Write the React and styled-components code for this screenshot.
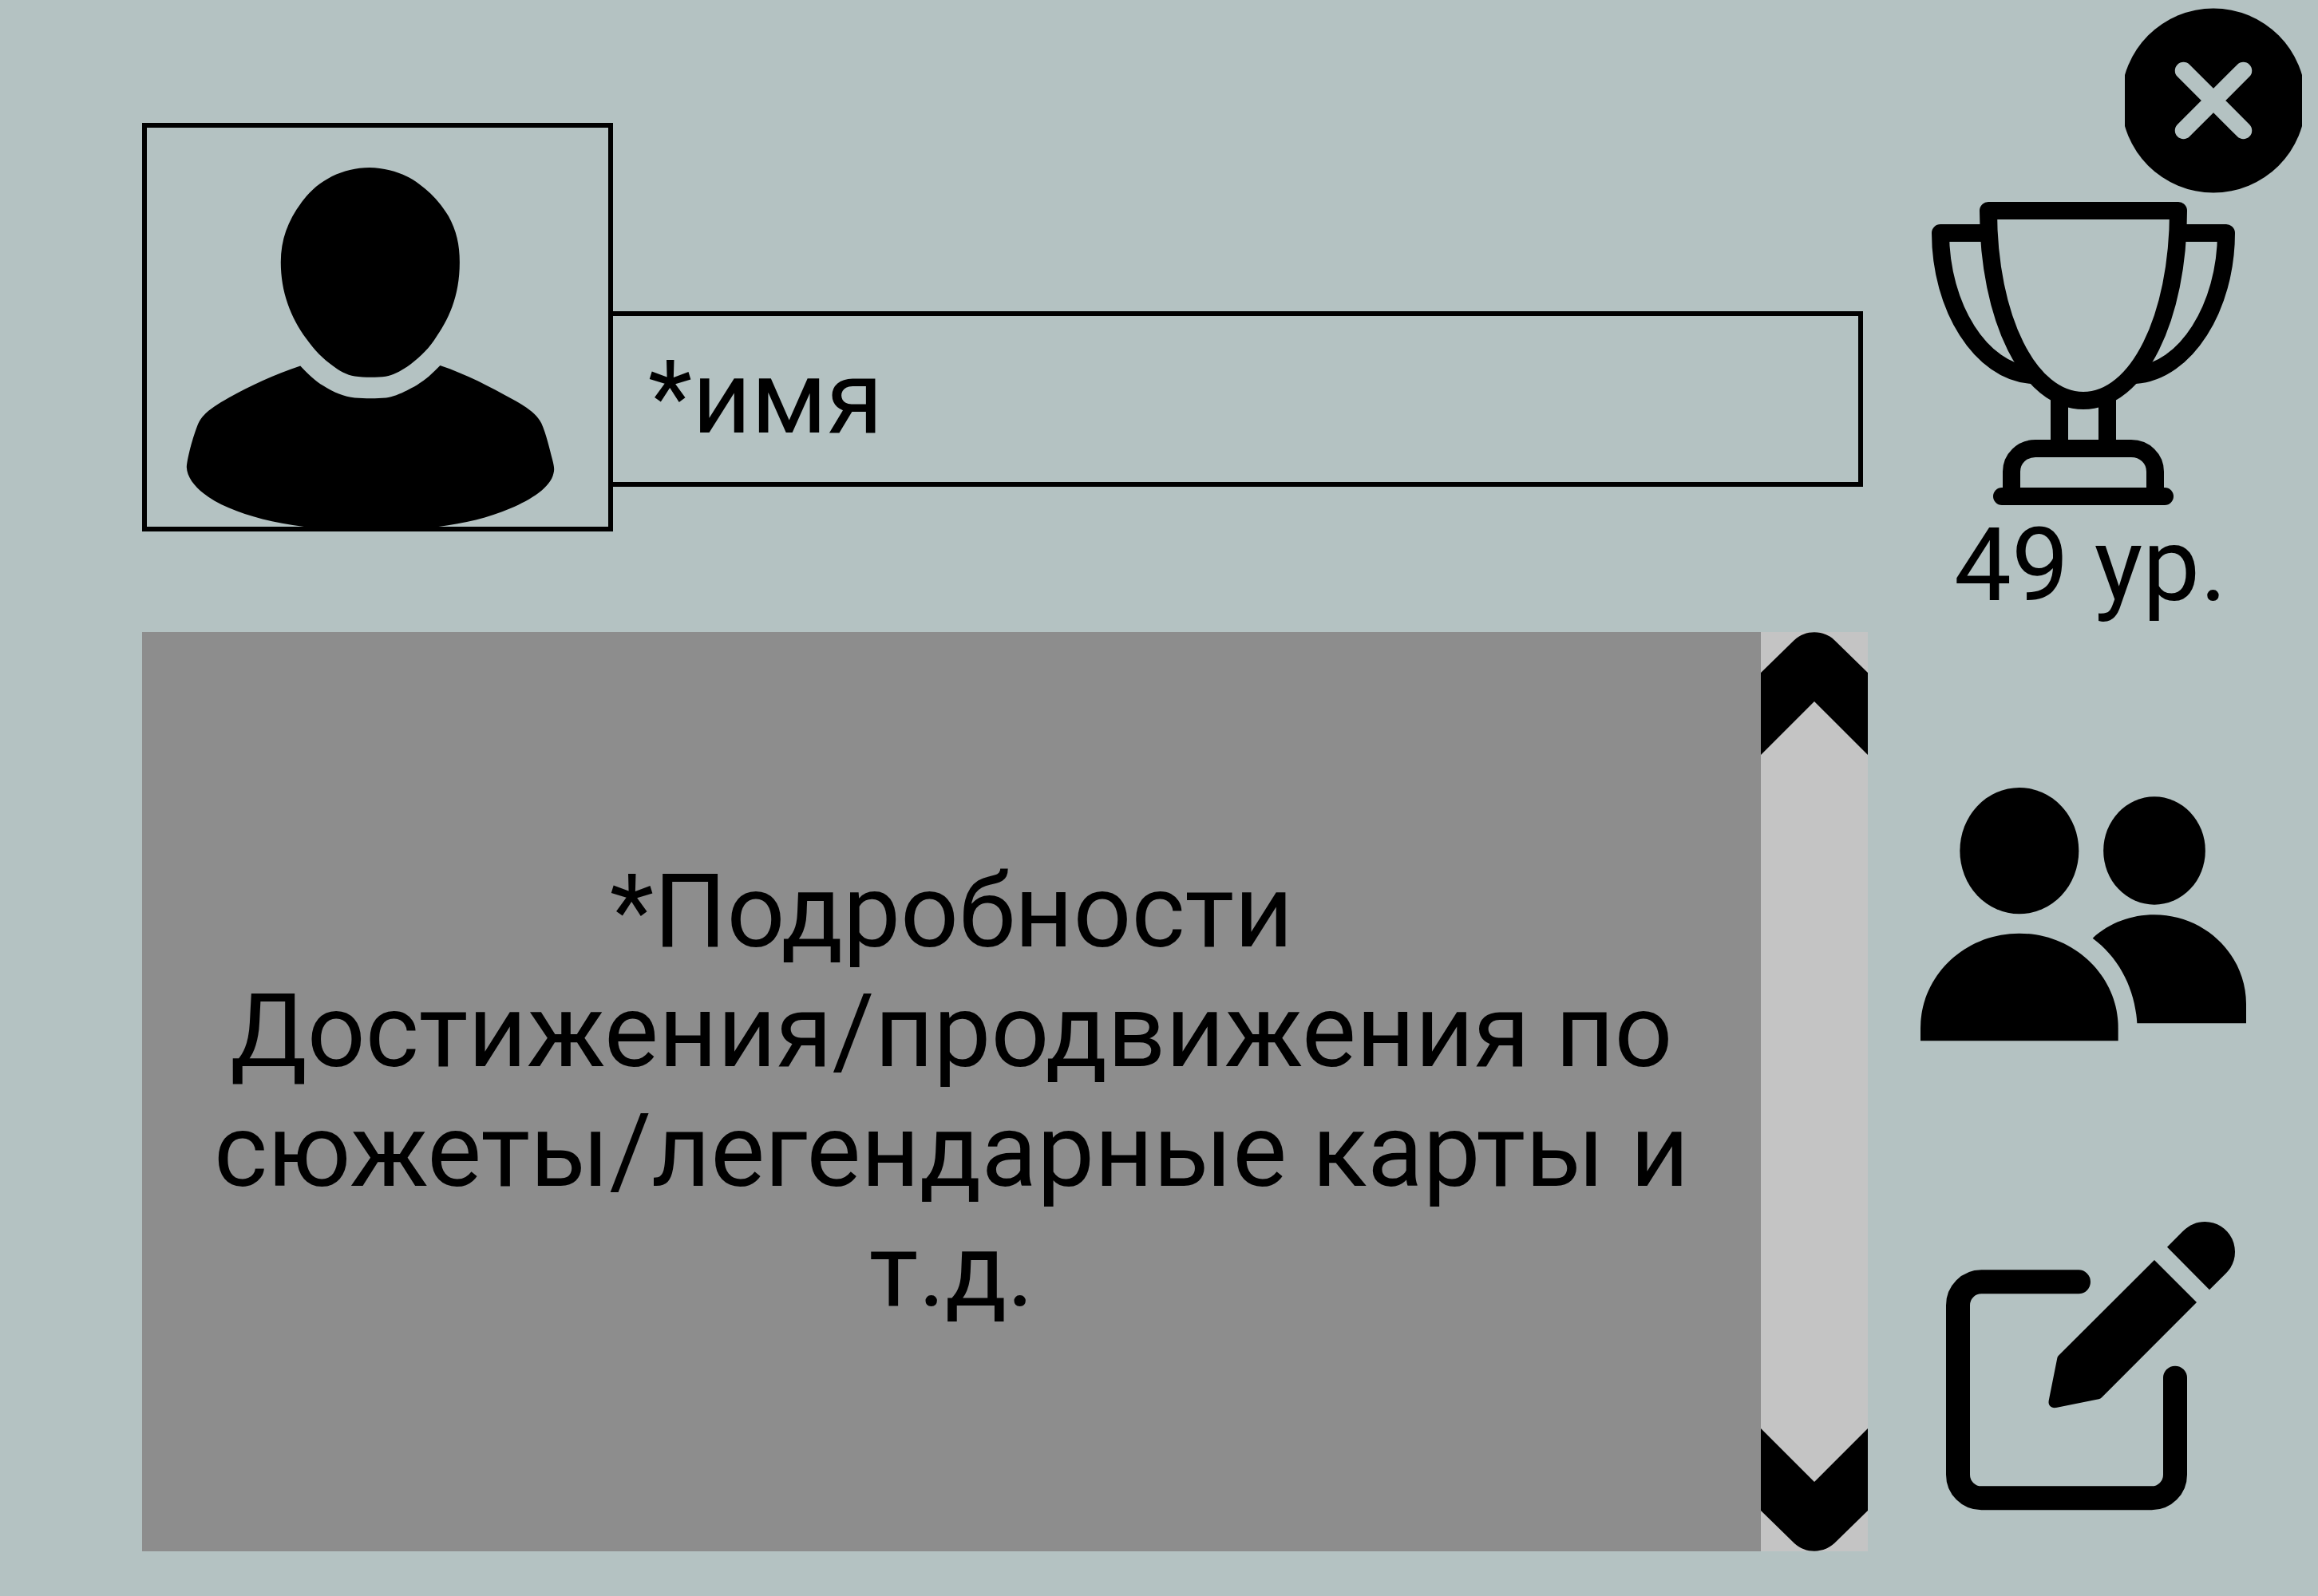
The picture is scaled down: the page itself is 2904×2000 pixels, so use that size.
import React from "react";
import styled, { createGlobalStyle } from "styled-components";

const colors = {
  page: "#b4c2c2",
  panel: "#8d8d8d",
  track: "#c4c4c4",
  ink: "#000000",
};

const GlobalStyle = createGlobalStyle`
  *, *::before, *::after { box-sizing: border-box; }
  body {
    margin: 0;
    background: ${colors.page};
    color: ${colors.ink};
    font-family: Roboto, "Noto Sans", sans-serif;
    font-size: 128px;
    line-height: 150px;
  }
`;

const Page = styled.div`
  display: grid;
  grid-template-columns: minmax(0, 1fr) 564px;
  min-height: 100vh;
`;

const Main = styled.main`
  display: flex;
  flex-direction: column;
  gap: 126px;
  padding: 154px 0 56px 178px;
`;

const ProfileHeader = styled.header`
  display: flex;
  align-items: flex-end;
  padding-right: 6px;
`;

const Avatar = styled.figure`
  flex: none;
  width: 590px;
  height: 512px;
  margin: 0;
  border: 6px solid ${colors.ink};
`;

const NameField = styled.label`
  flex: 1;
  display: flex;
  min-width: 0;
  margin: 0 0 56px -6px;
  border: 6px solid ${colors.ink};
`;

const NameInput = styled.input`
  flex: 1;
  width: 100%;
  min-width: 0;
  height: 208px;
  padding: 0 44px 4px;
  border: 0;
  background: transparent;
  color: inherit;
  font: inherit;
`;

const DetailsPanel = styled.section`
  flex: 1;
  display: flex;
  background: ${colors.panel};
`;

const DetailsText = styled.p`
  flex: 1;
  align-self: center;
  margin: 0;
  padding-bottom: 2px;
  text-align: center;
`;

const ScrollTrack = styled.div`
  flex: none;
  display: flex;
  flex-direction: column;
  justify-content: space-between;
  width: 134px;
  background: ${colors.track};
`;

const IconButton = styled.button`
  display: block;
  padding: 0;
  border: 0;
  background: none;
  color: inherit;
  cursor: pointer;
`;

const Icon = styled.svg`
  display: block;
  width: ${({ $width }) => $width};
  height: ${({ $height }) => $height};
  transform: ${({ $flipped }) => ($flipped ? "scaleY(-1)" : "none")};
`;

const Sidebar = styled.aside`
  display: flex;
  flex-direction: column;
`;

const TopBar = styled.div`
  display: flex;
  justify-content: flex-end;
  padding: 10px 20px 11px;
`;

const Actions = styled.nav`
  display: flex;
  flex-direction: column;
  align-items: center;
  gap: 204px;
  padding-right: 24px;
`;

const Level = styled.div`
  display: flex;
  flex-direction: column;
  align-items: center;
`;

const LevelText = styled.span`
  padding-left: 18px;
`;

const FriendsButton = styled(IconButton)`
  padding-bottom: 22px;
`;

const PersonIcon = () => (
  <Icon $width="100%" $height="100%" viewBox="59 58 1416 1451" preserveAspectRatio="none" aria-hidden="true">
    <path d="M742 203C803 204 856 228 895 263C932 295 960 332 985 380C1009 432 1019 482 1019 548C1019 672 985 758 940 832C918 870 888 902 858 927C835 945 815 958 792 963C765 967 723 967 697 962C672 957 650 942 630 924C600 900 572 865 548 825C500 748 470 655 470 548C470 460 494 390 540 320C585 250 660 203 742 203Z" />
    <path d="M530 924C555 956 578 981 600 996C632 1020 665 1037 697 1040C728 1043 765 1043 793 1040C822 1036 860 1013 888 994C915 974 934 954 959 923C1040 955 1115 1002 1180 1045C1225 1074 1255 1098 1270 1133C1284 1170 1295 1225 1303 1262C1308 1285 1311 1300 1307 1315C1298 1365 1240 1410 1175 1442C1105 1478 1030 1497 948 1510H548C450 1496 375 1473 310 1440C240 1405 183 1350 181 1292C184 1250 205 1165 217 1133C230 1098 265 1070 310 1040C375 997 450 955 530 924Z" />
  </Icon>
);

const ChevronIcon = ({ flipped }) => (
  <Icon $width="134px" $height="154px" $flipped={flipped} viewBox="0 0 134 154" aria-hidden="true">
    <path d="M0 51L42 10C56 -3 78 -3 92 10L134 51V154L67 87L0 154Z" />
  </Icon>
);

const CloseIcon = () => (
  <Icon $width="222px" $height="232px" viewBox="0 0 222 232" aria-hidden="true">
    <circle cx="111" cy="116" r="115.5" />
    <path d="M73.5 78.5L148.5 153.5M148.5 78.5L73.5 153.5" stroke={colors.page} strokeWidth="21.5" strokeLinecap="round" />
  </Icon>
);

const TrophyIcon = () => (
  <Icon $width="380px" $height="380px" viewBox="0 0 380 380" fill="none" stroke="currentColor" strokeWidth="22" strokeLinecap="round" strokeLinejoin="round" aria-hidden="true">
    <path d="M71 11H309C309 146 258 249 190 249S71 146 71 11Z" />
    <path d="M71 39H11C11 132 62 213 125 217" strokeLinecap="butt" />
    <path d="M309 39H369C369 132 318 213 255 217" strokeLinecap="butt" />
    <path d="M160 240V309M220 240V309" strokeLinecap="butt" />
    <path d="M100 369V338C100 322 113 309 130 309H250C267 309 280 322 280 338V369" />
    <path d="M88 369H292" />
  </Icon>
);

const FriendsIcon = () => (
  <Icon $width="408px" $height="318px" viewBox="78 82 1224 954" aria-hidden="true">
    <ellipse cx="449.5" cy="319.5" rx="223.5" ry="237.5" />
    <ellipse cx="957" cy="319" rx="191.5" ry="203" />
    <path d="M78 1034V985C78 789 244 630 449 630S821 789 821 985V1034Z" />
    <path d="M725 648C789 590 870 560 957 560C1148 560 1302 712 1302 895V968H892C885 840 825 722 725 648Z" />
  </Icon>
);

const EditIcon = () => (
  <Icon $width="380px" $height="362px" viewBox="60 92 1140 1086" aria-hidden="true">
    <path d="M612 318H247A88 88 0 0 0 159 406V1043A88 88 0 0 0 247 1131H887A88 88 0 0 0 975 1043V679" fill="none" stroke="currentColor" strokeWidth="90" strokeLinecap="round" />
    <path d="M897 236L1056 395L699 753Q695 758 688 759L528 791C510 794 497 783 500 765L532 604Q533 599 536 596Z" />
    <path d="M945 187L1003 129C1030 103 1056 92 1087 92C1150 92 1200 143 1200 205C1200 235 1190 262 1165 287L1104 348Z" />
  </Icon>
);

export default function App() {
  return (
    <>
      <GlobalStyle />
      <Page>
        <Main>
          <ProfileHeader>
            <Avatar>
              <PersonIcon />
            </Avatar>
            <NameField>
              <NameInput type="text" aria-label="имя" defaultValue="*имя" />
            </NameField>
          </ProfileHeader>
          <DetailsPanel>
            <DetailsText>
              *Подробности
              <br />
              Достижения/продвижения по сюжеты/легендарные карты и т.д.
            </DetailsText>
            <ScrollTrack>
              <IconButton type="button">
                <ChevronIcon />
              </IconButton>
              <IconButton type="button">
                <ChevronIcon flipped />
              </IconButton>
            </ScrollTrack>
          </DetailsPanel>
        </Main>
        <Sidebar>
          <TopBar>
            <IconButton type="button">
              <CloseIcon />
            </IconButton>
          </TopBar>
          <Actions>
            <Level>
              <TrophyIcon />
              <LevelText>49 ур.</LevelText>
            </Level>
            <FriendsButton type="button">
              <FriendsIcon />
            </FriendsButton>
            <IconButton type="button">
              <EditIcon />
            </IconButton>
          </Actions>
        </Sidebar>
      </Page>
    </>
  );
}
